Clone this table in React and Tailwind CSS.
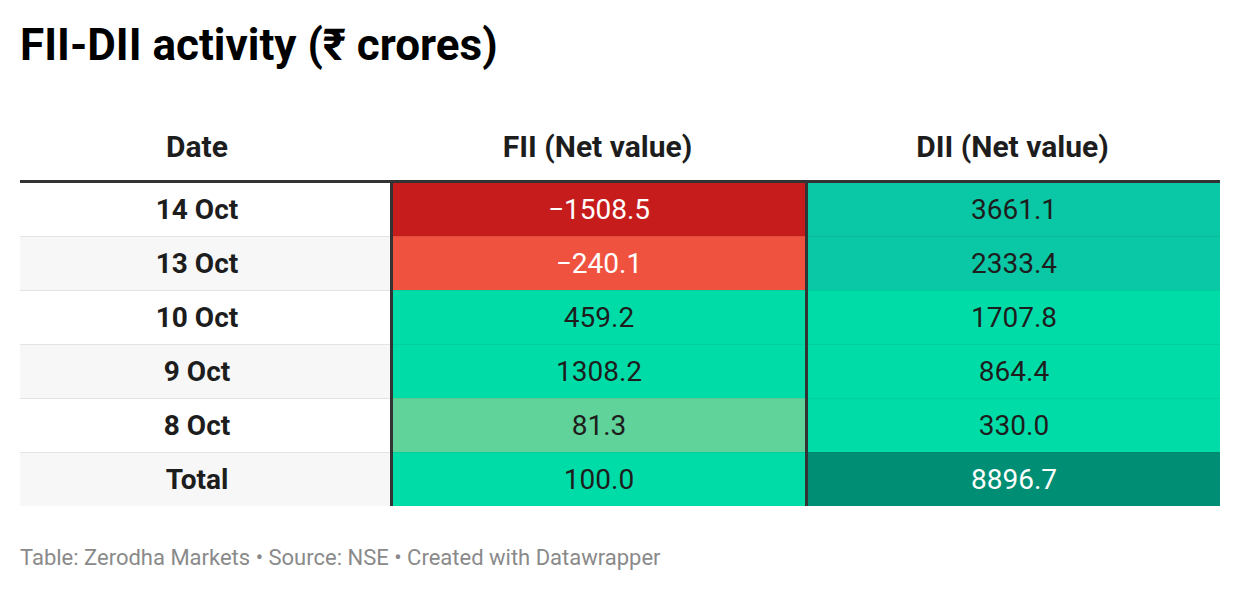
const rows = [
  { date: "14 Oct", fii: "−1508.5", fiiBg: "bg-[#c71c1c]", fiiText: "text-white", dii: "3661.1", diiBg: "bg-[#0ac7a5]", diiText: "text-[#1d1d1d]", zebra: "bg-white" },
  { date: "13 Oct", fii: "−240.1", fiiBg: "bg-[#f05240]", fiiText: "text-white", dii: "2333.4", diiBg: "bg-[#0ac7a5]", diiText: "text-[#1d1d1d]", zebra: "bg-[#f7f7f7]" },
  { date: "10 Oct", fii: "459.2", fiiBg: "bg-[#00dca8]", fiiText: "text-[#1d1d1d]", dii: "1707.8", diiBg: "bg-[#00dca8]", diiText: "text-[#1d1d1d]", zebra: "bg-white" },
  { date: "9 Oct", fii: "1308.2", fiiBg: "bg-[#00dca8]", fiiText: "text-[#1d1d1d]", dii: "864.4", diiBg: "bg-[#00dca8]", diiText: "text-[#1d1d1d]", zebra: "bg-[#f7f7f7]" },
  { date: "8 Oct", fii: "81.3", fiiBg: "bg-[#5fd39a]", fiiText: "text-[#1d1d1d]", dii: "330.0", diiBg: "bg-[#00dca8]", diiText: "text-[#1d1d1d]", zebra: "bg-white" },
  { date: "Total", fii: "100.0", fiiBg: "bg-[#00dca8]", fiiText: "text-[#1d1d1d]", dii: "8896.7", diiBg: "bg-[#008f74]", diiText: "text-white", zebra: "bg-[#f7f7f7]" },
];

export default function App() {
  return (
    <div className="w-[1240px] h-[592px] bg-white px-5 pt-[19px] font-['Roboto',sans-serif] text-[#1d1d1d]">
      <h1 className="text-[44px] leading-[52px] font-bold text-black">FII-DII activity (₹ crores)</h1>

      <div className="mt-[41px]">
        {/* header */}
        <div className="grid grid-cols-[370px_415px_415px] h-[71px] items-center border-b-[3px] border-[#333333] text-[30px] font-bold">
          <div className="text-center pr-4">Date</div>
          <div className="text-center">FII (Net value)</div>
          <div className="text-center">DII (Net value)</div>
        </div>

        {/* body */}
        {rows.map((r, i) => {
          const first = i === 0;
          return (
            <div
              key={r.date}
              className={`grid grid-cols-[370px_415px_415px] text-[28px] ${first ? "h-[53px]" : "h-[54px]"} ${r.zebra}`}
            >
              <div className={`flex items-center justify-center pr-4 font-bold ${first ? "" : "pt-px shadow-[inset_0_1px_0_#e3e3e3]"}`}>{r.date}</div>
              <div className={`flex items-center justify-center border-l-[3px] border-[#333333] ${first ? "" : "pt-px shadow-[inset_0_1px_0_rgba(0,0,0,0.06)]"} ${r.fiiBg} ${r.fiiText}`}>{r.fii}</div>
              <div className={`flex items-center justify-center border-l-[3px] border-[#333333] ${first ? "" : "pt-px shadow-[inset_0_1px_0_rgba(0,0,0,0.06)]"} ${r.diiBg} ${r.diiText}`}>{r.dii}</div>
            </div>
          );
        })}
      </div>

      <div className="mt-[39px] text-[22px] leading-[26px] text-[#8a8a8a]">
        Table: Zerodha Markets • Source: NSE • Created with Datawrapper
      </div>
    </div>
  );
}
